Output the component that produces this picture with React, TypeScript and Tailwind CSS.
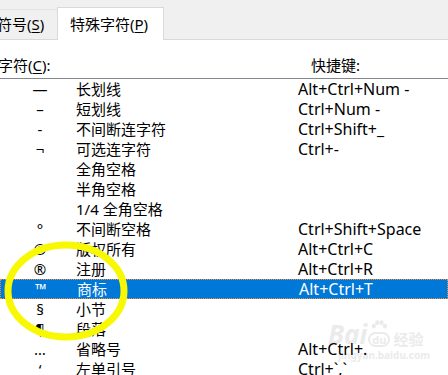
import React from 'react'

const rows = [
  { sym: '—', name: '长划线', key: 'Alt+Ctrl+Num -' },
  { sym: '–', name: '短划线', key: 'Ctrl+Num -' },
  { sym: '‑', name: '不间断连字符', key: 'Ctrl+Shift+_' },
  { sym: '¬', name: '可选连字符', key: 'Ctrl+-' },
  { sym: '', name: '全角空格', key: '' },
  { sym: '', name: '半角空格', key: '' },
  { sym: '', name: '1/4 全角空格', key: '' },
  { sym: '°', name: '不间断空格', key: 'Ctrl+Shift+Space' },
  { sym: '©', name: '版权所有', key: 'Alt+Ctrl+C' },
  { sym: '®', name: '注册', key: 'Alt+Ctrl+R' },
  { sym: '™', name: '商标', key: 'Alt+Ctrl+T', active: true },
  { sym: '§', name: '小节', key: '' },
  { sym: '¶', name: '段落', key: '' },
  { sym: '…', name: '省略号', key: 'Alt+Ctrl+.' },
  { sym: '‘', name: '左单引号', key: 'Ctrl+`,`' },
]

const font = "font-['Noto_Sans','Noto_Sans_CJK_SC',sans-serif]"

export default function App() {
  return (
    <div className={`relative w-[448px] h-[375px] overflow-hidden bg-white text-[15px] text-black ${font}`}>
      {/* tab strip */}
      <div className="h-[40px] bg-[#f0f0f0] border-b border-[#d9d9d9] flex items-end">
        <div className="w-[57px] h-[30px] border-t border-[#e3e3e3] flex items-center overflow-hidden">
          <span className="-ml-[3px] whitespace-nowrap leading-none">
            符号(<span className="underline underline-offset-2">S</span>)
          </span>
        </div>
        <div className="w-[107px] h-[33px] -mb-px bg-white border border-b-0 border-[#d9d9d9] flex items-center pl-[12px]">
          <span className="whitespace-nowrap leading-none">
            特殊字符(<span className="underline underline-offset-2">P</span>)
          </span>
        </div>
      </div>

      {/* labels */}
      <div className="h-[39px] flex items-center pt-[12px] border-b border-[#828790]">
        <span className="-ml-[2px] w-[313px] whitespace-nowrap">
          字符(<span className="underline underline-offset-2">C</span>):
        </span>
        <span>快捷键:</span>
      </div>

      {/* watermark */}
      <div className="absolute left-[328px] top-[320px] text-[#ebebeb] pointer-events-none select-none">
        <div className="flex items-end gap-[1px] leading-none">
          <span className="text-[26px] font-bold italic">Bai</span>
          <span className="flex flex-col items-center">
            <svg width="18" height="12" viewBox="0 0 20 14">
              <g fill="#ebebeb">
                <ellipse cx="4" cy="7" rx="2.5" ry="3" />
                <ellipse cx="8" cy="3" rx="2.5" ry="3" />
                <ellipse cx="13" cy="3" rx="2.5" ry="3" />
                <ellipse cx="17" cy="7" rx="2.5" ry="3" />
              </g>
            </svg>
            <span className="rounded-full border-2 border-[#ebebeb] text-[11px] font-bold px-[2px]">du</span>
          </span>
          <span className="text-[15px] font-bold ml-[2px]">经验</span>
        </div>
        <div className="text-[10px] font-bold leading-none mt-[3px] ml-[10px]">jingyan.baidu.com</div>
      </div>

      {/* list */}
      <div className="relative flex flex-col">
        {rows.map((r, i) => (
          <div
            key={i}
            className={`grid grid-cols-[76px_222px_1fr] h-[20px] items-center leading-none whitespace-nowrap ${
              r.active ? 'bg-[#0078d7] text-white border border-dotted border-[#f0913a]' : ''
            }`}
          >
            <span className="pl-1 text-center">{r.sym}</span>
            <span>{r.name}</span>
            <span className="text-[16px]">{r.key}</span>
          </div>
        ))}
      </div>

      {/* yellow marker */}
      <svg className="absolute left-0 top-0 pointer-events-none" width="448" height="375">
        <ellipse cx="66" cy="291" rx="58" ry="46" fill="none" stroke="#f8f800" strokeWidth="7" />
      </svg>
    </div>
  )
}
